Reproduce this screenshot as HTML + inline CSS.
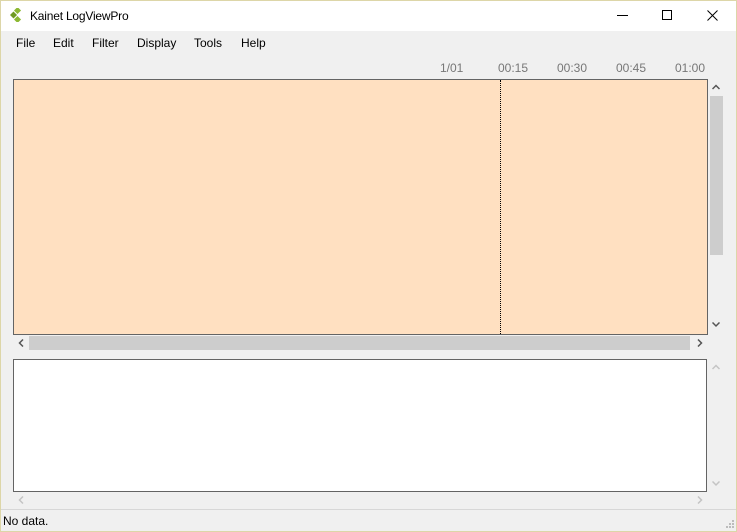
<!DOCTYPE html>
<html><head><style>
*{margin:0;padding:0;box-sizing:border-box}
body{width:737px;height:532px;overflow:hidden;background:#f0f0f0;font-family:"Liberation Sans",sans-serif;font-size:12px;color:#000;position:relative}
.a{position:absolute}
</style></head><body>
<div class="a" style="left:0;top:0;width:737px;height:532px;border:1px solid #ddd6a8"></div>
<div class="a" style="left:1px;top:1px;width:735px;height:30px;background:#fff"></div>
<svg class="a" style="left:10px;top:8px" width="14" height="14" viewBox="0 0 14 14">
<rect x="5" y="0" width="5" height="5" fill="#8cb832" transform="rotate(45 7.5 2.5)"/>
<rect x="1" y="4.5" width="5" height="5" fill="#6f9a22" transform="rotate(45 3.5 7)"/>
<rect x="5" y="9" width="5" height="5" fill="#8cb832" transform="rotate(45 7.5 11.5)"/>
</svg>
<div class="a" style="left:30px;top:9px;font-size:12px;letter-spacing:-0.2px">Kainet LogViewPro</div>
<div class="a" style="left:617px;top:15px;width:11px;height:1px;background:#000"></div>
<div class="a" style="left:662px;top:10px;width:10px;height:10px;border:1px solid #000"></div>
<svg class="a" style="left:707px;top:10px" width="11" height="11"><path d="M0.5 0.5L10.5 10.5M10.5 0.5L0.5 10.5" stroke="#000" stroke-width="1"/></svg>
<div class="a" style="left:16px;top:36px">File</div>
<div class="a" style="left:53px;top:36px">Edit</div>
<div class="a" style="left:92px;top:36px">Filter</div>
<div class="a" style="left:137px;top:36px">Display</div>
<div class="a" style="left:194px;top:36px">Tools</div>
<div class="a" style="left:241px;top:36px">Help</div>
<div class="a" style="left:440px;top:61px;color:#777">1/01</div>
<div class="a" style="left:498px;top:61px;color:#777">00:15</div>
<div class="a" style="left:557px;top:61px;color:#777">00:30</div>
<div class="a" style="left:616px;top:61px;color:#777">00:45</div>
<div class="a" style="left:675px;top:61px;color:#777">01:00</div>
<div class="a" style="left:13px;top:79px;width:695px;height:256px;background:#ffe0c1;border:1px solid #646464"></div>
<div class="a" style="left:500px;top:80px;height:254px;border-left:1px dotted #000"></div>
<div class="a" style="left:710px;top:96px;width:13px;height:159px;background:#cdcdcd"></div>
<svg class="a" style="left:712px;top:322px" width="8" height="6"><path d="M0.5 0.5L4 4L7.5 0.5" stroke="#555" stroke-width="1.5" fill="none"/></svg>
<svg class="a" style="left:712px;top:84px" width="8" height="6"><path d="M0.5 5L4 1.5L7.5 5" stroke="#555" stroke-width="1.5" fill="none"/></svg>
<div class="a" style="left:29px;top:336px;width:661px;height:14px;background:#cdcdcd"></div>
<svg class="a" style="left:18px;top:339px" width="6" height="8"><path d="M5 0.5L1.5 4L5 7.5" stroke="#555" stroke-width="1.5" fill="none"/></svg>
<svg class="a" style="left:697px;top:339px" width="6" height="8"><path d="M1 0.5L4.5 4L1 7.5" stroke="#555" stroke-width="1.5" fill="none"/></svg>
<div class="a" style="left:13px;top:359px;width:694px;height:133px;background:#fff;border:1px solid #646464"></div>
<svg class="a" style="left:712px;top:364px" width="8" height="6"><path d="M0.5 5L4 1.5L7.5 5" stroke="#c4c4c4" stroke-width="1.5" fill="none"/></svg>
<svg class="a" style="left:712px;top:481px" width="8" height="6"><path d="M0.5 0.5L4 4L7.5 0.5" stroke="#c4c4c4" stroke-width="1.5" fill="none"/></svg>
<svg class="a" style="left:18px;top:496px" width="6" height="8"><path d="M5 0.5L1.5 4L5 7.5" stroke="#c4c4c4" stroke-width="1.5" fill="none"/></svg>
<svg class="a" style="left:697px;top:496px" width="6" height="8"><path d="M1 0.5L4.5 4L1 7.5" stroke="#c4c4c4" stroke-width="1.5" fill="none"/></svg>
<div class="a" style="left:1px;top:509px;width:735px;height:1px;background:#d7d7d7"></div>
<div class="a" style="left:3px;top:514px">No data.</div>
<svg class="a" style="left:726px;top:520px" width="9" height="9"><g fill="#bcbcbc"><rect x="6" y="0" width="2" height="2"/><rect x="3" y="3" width="2" height="2"/><rect x="6" y="3" width="2" height="2"/><rect x="0" y="6" width="2" height="2"/><rect x="3" y="6" width="2" height="2"/><rect x="6" y="6" width="2" height="2"/></g></svg>
</body></html>
